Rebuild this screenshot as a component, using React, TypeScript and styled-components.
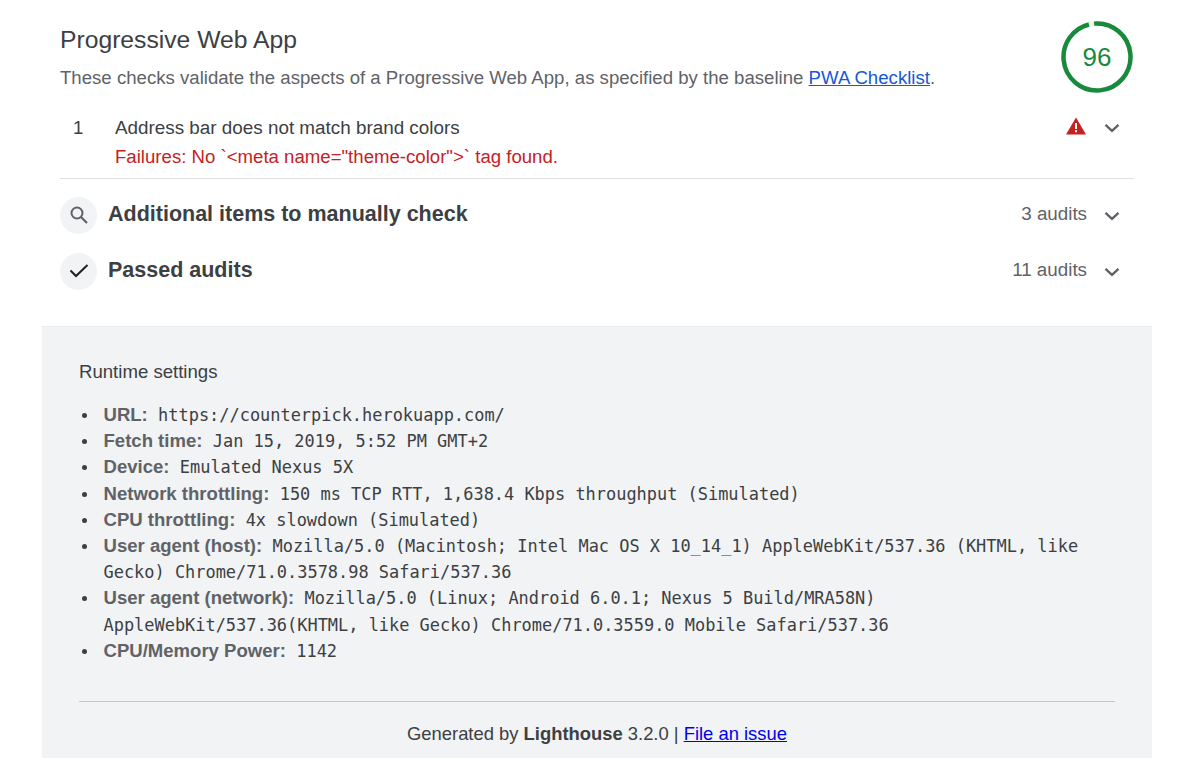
import styled, { createGlobalStyle } from 'styled-components';

const GlobalStyle = createGlobalStyle`
  html, body {
    margin: 0;
    padding: 0;
    background: #fff;
  }
  body {
    height: 758px;
    overflow: hidden;
    font-family: "Liberation Sans", Arial, sans-serif;
    color: #3c4043;
  }
`;

const Chevron = () => (
  <ChevronIcon viewBox="0 0 16 10">
    <path d="M1.5 1.8l6.5 6 6.5-6" fill="none" stroke="#5f6368" strokeWidth="2.4" />
  </ChevronIcon>
);

const settings = [
  { label: 'URL:', value: 'https://counterpick.herokuapp.com/' },
  { label: 'Fetch time:', value: 'Jan 15, 2019, 5:52 PM GMT+2' },
  { label: 'Device:', value: 'Emulated Nexus 5X' },
  { label: 'Network throttling:', value: '150 ms TCP RTT, 1,638.4 Kbps throughput (Simulated)' },
  { label: 'CPU throttling:', value: '4x slowdown (Simulated)' },
  {
    label: 'User agent (host):',
    value: 'Mozilla/5.0 (Macintosh; Intel Mac OS X 10_14_1) AppleWebKit/537.36 (KHTML, like Gecko) Chrome/71.0.3578.98 Safari/537.36',
  },
  {
    label: 'User agent (network):',
    value: 'Mozilla/5.0 (Linux; Android 6.0.1; Nexus 5 Build/MRA58N) AppleWebKit/537.36(KHTML, like Gecko) Chrome/71.0.3559.0 Mobile Safari/537.36',
  },
  { label: 'CPU/Memory Power:', value: '1142' },
];

const App = () => {
  return (
    <Page>
      <GlobalStyle />
      <Category>
        <Header>
          <HeaderText>
            <Title>Progressive Web App</Title>
            <Description>
              These checks validate the aspects of a Progressive Web App, as specified by the baseline{' '}
              <DocLink href="#">PWA Checklist</DocLink>.
            </Description>
          </HeaderText>
          <Gauge>
            <svg width="72" height="72" viewBox="0 0 72 72">
              <circle cx="36" cy="36" r="33.5" fill="none" stroke="#188a3c" strokeOpacity="0.1" strokeWidth="4.5" />
              <circle
                cx="36"
                cy="36"
                r="33.5"
                fill="none"
                stroke="#188a3c"
                strokeWidth="4.5"
                pathLength={100}
                strokeDasharray="97.5 100"
                transform="rotate(-95 36 36)"
              />
            </svg>
            <GaugeValue>96</GaugeValue>
          </Gauge>
        </Header>

        <Audit>
          <AuditIndex>1</AuditIndex>
          <AuditBody>
            <AuditTitle>Address bar does not match brand colors</AuditTitle>
            <AuditError>Failures: No `&lt;meta name="theme-color"&gt;` tag found.</AuditError>
          </AuditBody>
          <WarnIcon viewBox="0 0 20 18">
            <path d="M10 0.5L20 17.5H0z" fill="#c5221f" />
            <rect x="9" y="6" width="2" height="6" fill="#fff" />
            <rect x="9" y="13.2" width="2" height="2" fill="#fff" />
          </WarnIcon>
          <Chevron />
        </Audit>

        <Groups>
          <Group>
            <GroupIcon>
              <svg width="20" height="20" viewBox="0 0 20 20">
                <circle cx="8" cy="8" r="5.5" fill="none" stroke="#5f6368" strokeWidth="2" />
                <path d="M12 12l6 6" stroke="#5f6368" strokeWidth="2.2" />
              </svg>
            </GroupIcon>
            <GroupTitle>Additional items to manually check</GroupTitle>
            <GroupCount>3 audits</GroupCount>
            <Chevron />
          </Group>

          <Group>
            <GroupIcon>
              <svg width="20" height="20" viewBox="0 0 20 20">
                <path d="M1.5 9.5l5.5 5.5L18.5 4" fill="none" stroke="#212121" strokeWidth="2" />
              </svg>
            </GroupIcon>
            <GroupTitle>Passed audits</GroupTitle>
            <GroupCount>11 audits</GroupCount>
            <Chevron />
          </Group>
        </Groups>
      </Category>

      <Footer>
        <FooterTitle>Runtime settings</FooterTitle>
        <SettingsList>
          {settings.map((item) => (
            <SettingsItem key={item.label}>
              <strong>{item.label}</strong>
              {'  '}
              <Mono>{item.value}</Mono>
            </SettingsItem>
          ))}
        </SettingsList>
        <Generated>
          Generated by <strong>Lighthouse</strong> 3.2.0 | <FooterLink href="#">File an issue</FooterLink>
        </Generated>
      </Footer>
    </Page>
  );
};

export default App;

// Styled Components
const Page = styled.div`
  width: 1200px;
  height: 758px;
  padding: 0 48px 0 42px;
  box-sizing: border-box;
  display: flex;
  flex-direction: column;
`;

const Category = styled.section`
  height: 326px;
  padding: 0 18px;
  box-sizing: border-box;
`;

const Header = styled.header`
  height: 110px;
  display: flex;
  justify-content: space-between;
  padding-top: 21px;
  box-sizing: border-box;
`;

const HeaderText = styled.div`
  display: flex;
  flex-direction: column;
`;

const Title = styled.h1`
  margin: 0;
  padding-top: 1px;
  font-size: 24.7px;
  line-height: 36px;
  font-weight: 400;
  color: #3c4043;
`;

const Description = styled.p`
  margin: 6px 0 0;
  font-size: 18.63px;
  line-height: 27px;
  color: #5f6368;
`;

const DocLink = styled.a`
  color: #1558d6;
`;

const Gauge = styled.div`
  position: relative;
  width: 72px;
  height: 72px;
  margin-right: 1px;
`;

const GaugeValue = styled.div`
  position: absolute;
  inset: 0;
  display: flex;
  align-items: center;
  justify-content: center;
  font-size: 26px;
  color: #188a3c;
`;

const Audit = styled.div`
  height: 69px;
  display: flex;
  align-items: flex-start;
  padding: 4px 14px 0 13px;
  box-sizing: border-box;
  border-bottom: 1px solid #e0e0e0;
`;

const AuditIndex = styled.div`
  width: 42px;
  font-size: 18.6px;
  line-height: 27px;
  color: #3c4043;
`;

const AuditBody = styled.div`
  flex: 1;
`;

const AuditTitle = styled.div`
  font-size: 18.85px;
  line-height: 27px;
  color: #3c4043;
`;

const AuditError = styled.div`
  margin-top: 2px;
  font-size: 18.63px;
  line-height: 27px;
  color: #c5221f;
`;

const WarnIcon = styled.svg`
  width: 20px;
  height: 18px;
  margin: 3px 18px 0 0;
`;

const ChevronIcon = styled.svg`
  width: 16px;
  height: 10px;
  flex: none;
  margin-top: 9px;
`;

const Groups = styled.div`
  padding-top: 8px;
`;

const Group = styled.div`
  height: 56px;
  display: flex;
  align-items: center;
  padding-right: 14px;

  ${ChevronIcon} {
    margin-top: 2px;
  }
`;

const GroupIcon = styled.div`
  width: 37px;
  height: 37px;
  border-radius: 50%;
  background: #f1f3f4;
  display: flex;
  align-items: center;
  justify-content: center;
  margin-right: 11px;
`;

const GroupTitle = styled.div`
  flex: 1;
  margin-top: -1px;
  font-size: 21.5px;
  font-weight: 700;
  color: #3c4043;
`;

const GroupCount = styled.div`
  margin: -2px 17px 0 0;
  font-size: 18.8px;
  color: #5f6368;
`;

const Footer = styled.footer`
  flex: 1;
  background: #f1f3f4;
  border-top: 1px solid #ebebeb;
  padding: 31px 37px 0;
`;

const FooterTitle = styled.div`
  font-size: 18.6px;
  line-height: 27px;
  color: #3c4043;
`;

const SettingsList = styled.ul`
  margin: 17px 0 0;
  padding: 0 0 0 24.5px;
  height: 300px;
  box-sizing: border-box;
  border-bottom: 1px solid #c8c8c8;
  list-style: none;
`;

const SettingsItem = styled.li`
  position: relative;
  font-size: 18.56px;
  line-height: 26.2px;
  color: #3c4043;
  white-space: pre-wrap;

  strong {
    color: #5f6368;
  }

  &::before {
    content: '';
    position: absolute;
    left: -21.5px;
    top: 11px;
    width: 5px;
    height: 5px;
    border-radius: 50%;
    background: #3c4043;
  }
`;

const Mono = styled.span`
  font-family: "DejaVu Sans Mono", monospace;
  font-size: 16.95px;
  color: #3c4043;
`;

const Generated = styled.div`
  text-align: center;
  font-size: 18.4px;
  line-height: 27px;
  margin-top: 18px;
  color: #3c4043;
`;

const FooterLink = styled.a`
  color: #0000ee;
`;
